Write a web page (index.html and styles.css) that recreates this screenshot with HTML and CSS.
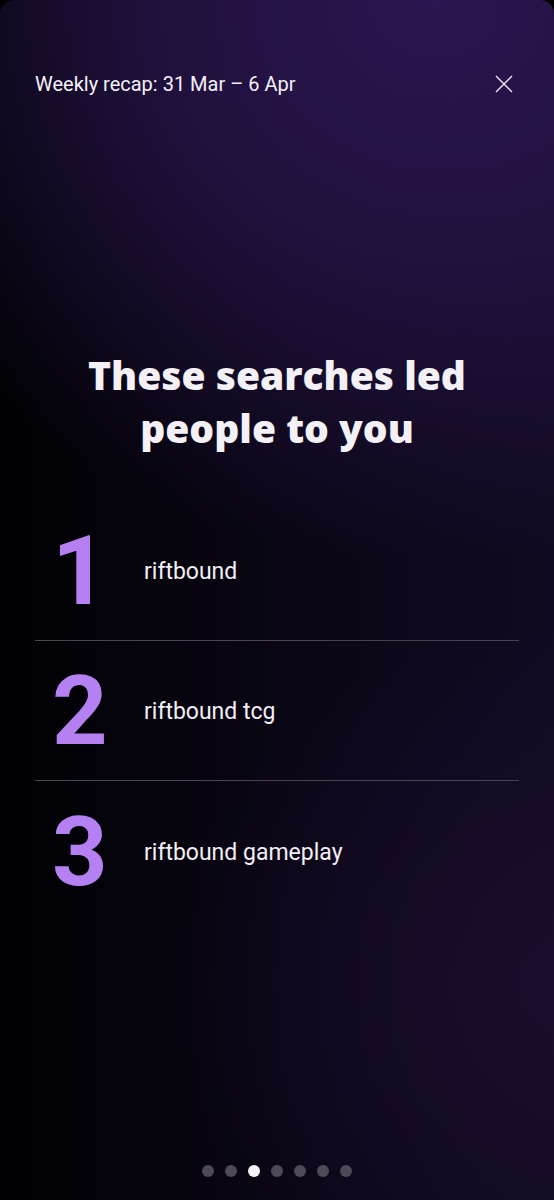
FILE: index.html
```html
<!DOCTYPE html>
<html lang="en">
<head>
<meta charset="utf-8">
<link rel="stylesheet" href="styles.css">
</head>
<body>
<div class="screen">
  <header class="topbar">
    <span class="recap">Weekly recap: 31 Mar – 6 Apr</span>
    <svg class="close" width="18" height="18" viewBox="0 0 18 18" aria-label="Close">
      <path d="M1 1 L17 17 M17 1 L1 17" stroke="#e6def0" stroke-width="1.5" fill="none"/>
    </svg>
  </header>
  <h1 class="title">These searches led<br>people to you</h1>
  <ol class="list">
    <li class="row"><span class="num">1</span><span class="term">riftbound</span></li>
    <li class="row"><span class="num">2</span><span class="term">riftbound tcg</span></li>
    <li class="row last"><span class="num">3</span><span class="term">riftbound gameplay</span></li>
  </ol>
  <div class="spacer"></div>
  <div class="dots">
    <span class="dot"></span><span class="dot"></span><span class="dot active"></span><span class="dot"></span><span class="dot"></span><span class="dot"></span><span class="dot"></span>
  </div>
</div>
</body>
</html>
```
FILE: styles.css
```css
html, body {
  margin: 0;
  padding: 0;
  background: #000;
}
.screen {
  width: 554px;
  height: 1200px;
  box-sizing: border-box;
  border-radius: 14px 14px 0 0;
  overflow: hidden;
  display: flex;
  flex-direction: column;
  font-family: Roboto, "Liberation Sans", sans-serif;
  color: #fff;
  background:
    radial-gradient(ellipse 620px 560px at 78% 0%, rgba(42,22,80,1) 0%, rgba(36,19,68,0.85) 45%, rgba(20,10,40,0) 100%),
    radial-gradient(ellipse 380px 360px at 100% 82%, rgba(28,14,48,0.85) 0%, rgba(20,10,36,0) 100%),
    linear-gradient(to right, #010103 0%, #0a0614 50%, #110a20 100%);
}
.topbar {
  display: flex;
  align-items: center;
  justify-content: space-between;
  padding: 72px 41px 0 35px;
  height: 24px;
}
.recap {
  font-size: 20px;
  color: #f4f0f8;
}
.close {
  display: block;
}
.title {
  margin: 252px 0 0;
  text-align: center;
  font-family: "Open Sans", Lato, sans-serif;
  font-weight: 800;
  font-size: 39px;
  line-height: 53px;
  color: #f3f1f5;
  letter-spacing: 0;
}
.list {
  list-style: none;
  margin: 47px 35px 0;
  padding: 0;
}
.row {
  height: 140px;
  display: flex;
  align-items: center;
  border-bottom: 1px solid #4a4452;
  box-sizing: border-box;
  padding-top: 2px;
}
.row.last {
  border-bottom: none;
}
.num {
  width: 109px;
  padding-left: 17px;
  box-sizing: border-box;
  font-weight: 700;
  font-size: 97px;
  line-height: 1;
  color: #b480f2;
}
.term {
  font-size: 23px;
  color: #f2eff6;
}
.spacer {
  flex: 1;
}
.dots {
  display: flex;
  justify-content: center;
  gap: 11px;
  padding: 0 0 23px 0;
}
.dot {
  width: 12px;
  height: 12px;
  border-radius: 50%;
  background: #4e4a58;
}
.dot.active {
  background: #f6f4f8;
}
```
